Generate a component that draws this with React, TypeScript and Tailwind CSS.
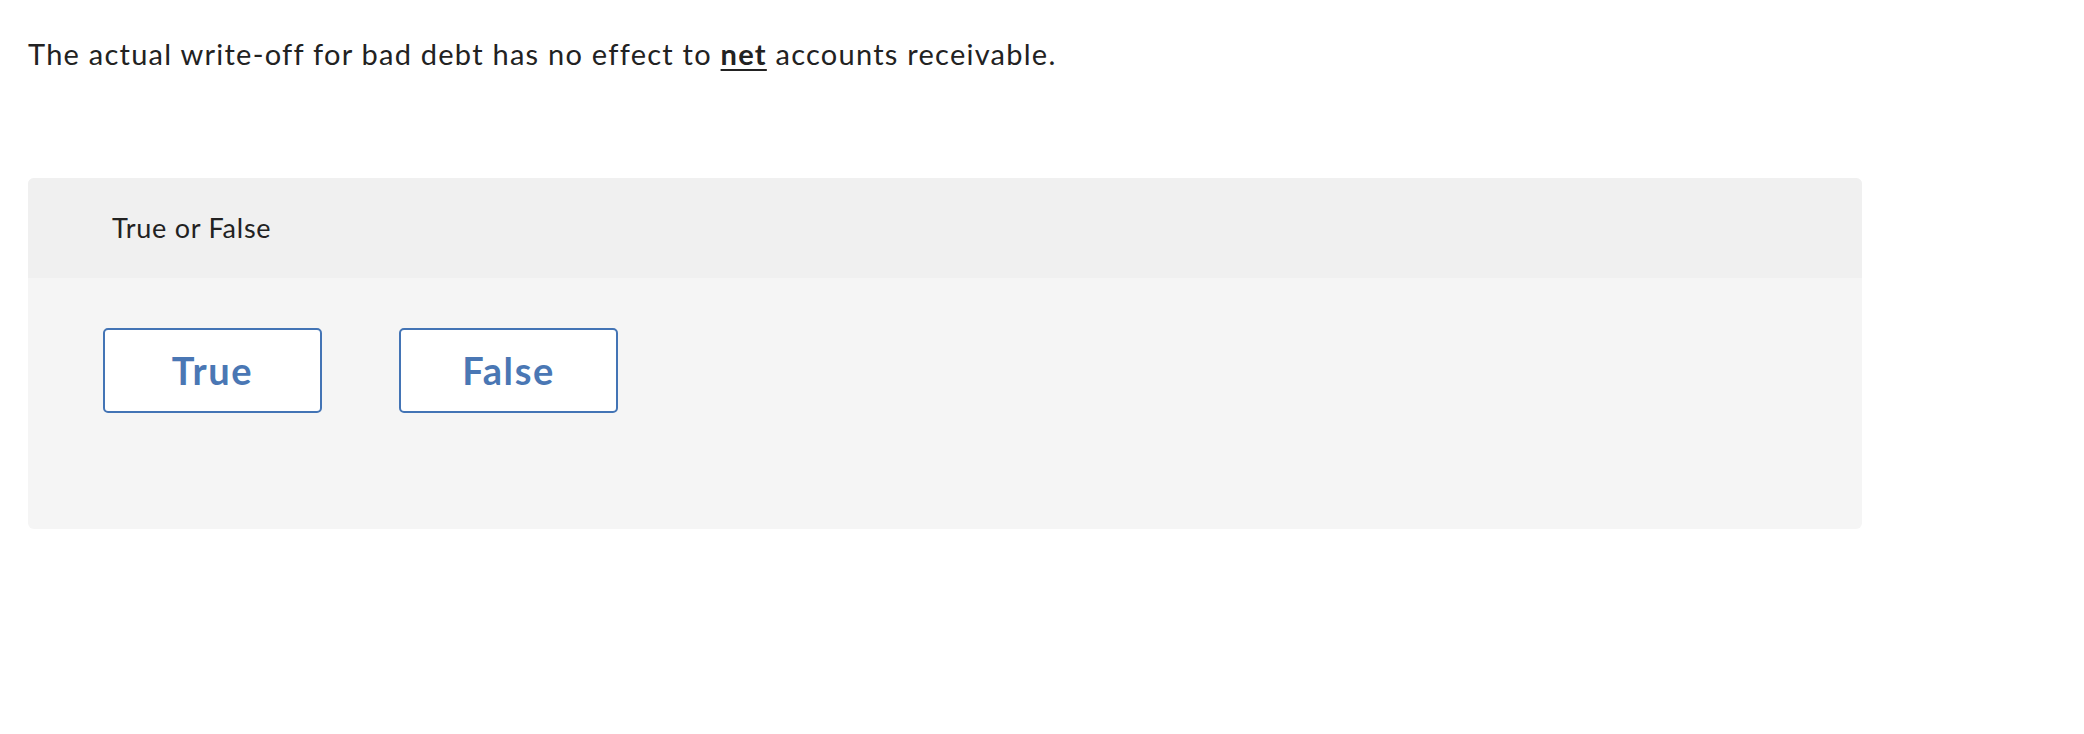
export default function App() {
  return (
    <div className="min-h-screen bg-white px-[28px] pt-[35px] font-['Lato',sans-serif] text-[#222]">
      <p className="text-[29px] leading-[37px] tracking-[1.25px]">
        The actual write-off for bad debt has no effect to{' '}
        <span className="font-bold underline decoration-2 underline-offset-4">net</span> accounts receivable.
      </p>
      <div className="mt-[106px] w-[1834px] overflow-hidden rounded-[6px] bg-[#f5f5f5]">
        <div className="flex h-[100px] items-center bg-[#f0f0f0] pl-[84px]">
          <span className="text-[27px] tracking-[0.75px]">True or False</span>
        </div>
        <div className="flex h-[251px] gap-[77px] pl-[75px] pt-[50px]">
          <button className="h-[85px] w-[219px] rounded-[5px] border-2 border-[#4374b5] bg-white text-[38px] font-bold tracking-[1.6px] text-[#4a77b4]">
            True
          </button>
          <button className="h-[85px] w-[219px] rounded-[5px] border-2 border-[#4374b5] bg-white text-[38px] font-bold tracking-[1.6px] text-[#4a77b4]">
            False
          </button>
        </div>
      </div>
    </div>
  )
}
